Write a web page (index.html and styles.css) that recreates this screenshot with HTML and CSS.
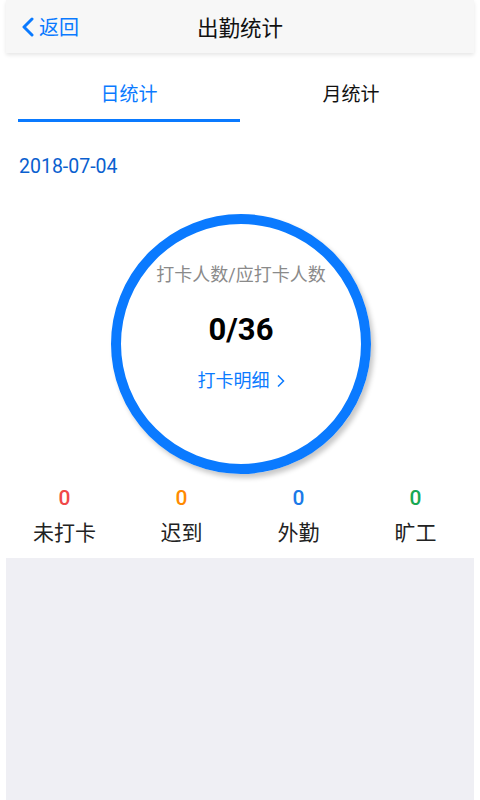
FILE: index.html
```html
<!DOCTYPE html>
<html lang="zh-CN">
<head>
  <meta charset="UTF-8" />
  <title>出勤统计</title>
  <link rel="stylesheet" href="styles.css">
</head>
<body>
  <div class="page">

    <!-- Top bar -->
    <div class="navbar">
      <a class="back" href="#">
        <svg width="12" height="20" viewBox="0 0 12 20"><polyline points="10,2 2,10 10,18" fill="none" stroke="#0a7aff" stroke-width="3" stroke-linecap="round" stroke-linejoin="round"/></svg>
        返回
      </a>
      <div class="title">出勤统计</div>
    </div>

    <!-- Tabs -->
    <div class="tabs">
      <div class="tab active">日统计</div>
      <div class="tab">月统计</div>
    </div>

    <div class="date">2018-07-04</div>

    <!-- Ring -->
    <div class="ring-wrap">
      <div class="ring">
        <div class="ring-label">打卡人数/应打卡人数</div>
        <div class="ring-count">0/36</div>
        <a class="ring-link" href="#">打卡明细
          <svg width="9" height="14" viewBox="0 0 9 14"><polyline points="2,1.5 7.5,7 2,12.5" fill="none" stroke="#0a7aff" stroke-width="1.5"/></svg>
        </a>
      </div>
    </div>

    <!-- Counters -->
    <div class="stats">
      <div class="stat"><span class="num red">0</span><span class="name">未打卡</span></div>
      <div class="stat"><span class="num orange">0</span><span class="name">迟到</span></div>
      <div class="stat"><span class="num blue">0</span><span class="name">外勤</span></div>
      <div class="stat"><span class="num green">0</span><span class="name">旷工</span></div>
    </div>

    <div class="filler"></div>
  </div>
</body>
</html>
```

FILE: styles.css
```css
html, body {
  margin: 0;
  height: 100%;
}
body {
  font-family: Roboto, "Noto Sans CJK SC", sans-serif;
  background: #fff;
  color: #111;
}
a {
  text-decoration: none;
}
.page {
  margin: 0 6px;
  height: 800px;
  display: flex;
  flex-direction: column;
}
.navbar {
  position: relative;
  height: 53px;
  background: #f7f7f7;
  box-shadow: 0 2px 4px rgba(0,0,0,0.1);
  display: flex;
  align-items: center;
  justify-content: center;
}
.back {
  position: absolute;
  left: 16px;
  top: 0;
  height: 53px;
  display: flex;
  align-items: center;
  gap: 5px;
  color: #0a7aff;
  font-size: 20px;
}
.title {
  font-size: 21.5px;
  color: #111;
}
.tabs {
  display: flex;
  padding: 0 12px;
}
.tab {
  flex: 1;
  text-align: center;
  font-size: 19px;
  line-height: 24px;
  padding: 30px 0 12px;
  border-bottom: 3px solid transparent;
  color: #111;
}
.tab.active {
  color: #0a7aff;
  border-bottom-color: #0a7aff;
}
.date {
  margin-top: 33px;
  padding-left: 13px;
  font-size: 19.5px;
  line-height: 24px;
  color: #0a5fcf;
}
.ring-wrap {
  display: flex;
  justify-content: center;
  margin-top: 35px;
  padding-left: 2px;
}
.ring {
  box-sizing: border-box;
  width: 260px;
  height: 260px;
  border-radius: 50%;
  border: 10px solid #0a7aff;
  box-shadow: 3px 4px 5px rgba(0,0,0,0.22);
  display: flex;
  flex-direction: column;
  align-items: center;
  padding-top: 39px;
}
.ring-label {
  font-size: 18px;
  line-height: 24px;
  color: #8a8a8a;
}
.ring-count {
  margin-top: 26px;
  font-size: 31px;
  font-weight: bold;
  line-height: 34px;
  color: #000;
}
.ring-link {
  margin-top: 22px;
  font-size: 18px;
  line-height: 24px;
  color: #0a7aff;
  display: flex;
  align-items: center;
  gap: 6px;
}
.stats {
  display: flex;
  margin-top: 12px;
  padding-bottom: 11px;
}
.stat {
  flex: 1;
  display: flex;
  flex-direction: column;
  align-items: center;
}
.num {
  font-size: 21px;
  font-weight: 500;
  line-height: 24px;
}
.name {
  margin-top: 9px;
  font-size: 21px;
  line-height: 28px;
  color: #222;
}
.red { color: #f04848; }
.orange { color: #ff8a00; }
.blue { color: #1a7ae8; }
.green { color: #17a852; }
.filler {
  flex: 1;
  background: #efeff4;
}
```
